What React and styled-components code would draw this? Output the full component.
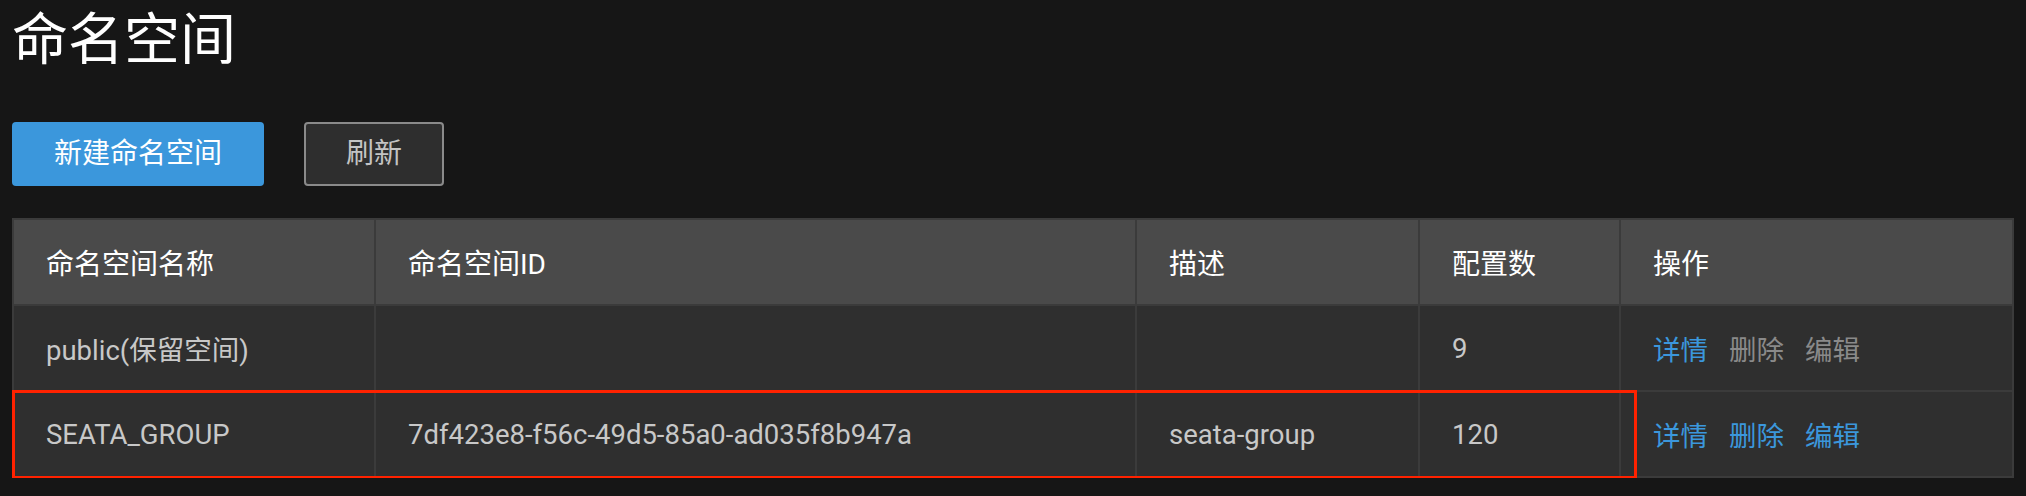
import React from 'react';
import styled, { createGlobalStyle } from 'styled-components';

const GlobalStyle = createGlobalStyle`
  body {
    margin: 0;
    padding: 0;
    background: #161616;
    font-family: Roboto, 'Noto Sans CJK SC', sans-serif;
    color: #ffffff;
  }
`;

const Page = styled.div`
  padding: 12px 12px 0 12px;
`;

const Title = styled.h1`
  margin: 0;
  font-size: 56px;
  line-height: 56px;
  font-weight: 400;
  color: #ffffff;
`;

const Toolbar = styled.div`
  display: flex;
  gap: 40px;
  margin-top: 54px;
`;

const Button = styled.button`
  box-sizing: border-box;
  height: 64px;
  padding: 0 ${(p) => (p.primary ? '42px' : '40px')};
  border-radius: 4px;
  font-family: inherit;
  font-size: 28px;
  line-height: 1;
  cursor: pointer;
  border: ${(p) => (p.primary ? 'none' : '2px solid #8a8a8a')};
  background: ${(p) => (p.primary ? '#3b97dc' : '#2e2e2e')};
  color: ${(p) => (p.primary ? '#ffffff' : '#c4c4c4')};
`;

const TableWrap = styled.div`
  position: relative;
  margin-top: 32px;
  width: 2002px;
`;

const Grid = styled.div`
  display: grid;
  grid-template-columns: 360px 759px 281px 199px 391px;
  grid-auto-rows: 84px;
  gap: 2px;
  padding: 2px;
  background: #3b3b3b;
`;

const Cell = styled.div`
  display: flex;
  align-items: center;
  gap: 21px;
  padding-left: 32px;
  font-size: ${(p) => (p.head ? '28px' : '27.5px')};
  background: ${(p) => (p.head ? '#4a4a4a' : '#2f2f2f')};
  color: ${(p) => (p.head ? '#ffffff' : '#c8c8c8')};
  white-space: nowrap;
`;

const Action = styled.a`
  color: ${(p) => (p.muted ? '#8a8a8a' : '#3b97dc')};
  text-decoration: none;
  cursor: pointer;
`;

const Highlight = styled.div`
  position: absolute;
  left: 0;
  top: 172px;
  width: 1625px;
  height: 89px;
  box-sizing: border-box;
  border: 3px solid #ff2200;
  pointer-events: none;
`;

const columns = ['命名空间名称', '命名空间ID', '描述', '配置数', '操作'];

const rows = [
  { name: 'public(保留空间)', id: '', desc: '', count: '9', reserved: true },
  {
    name: 'SEATA_GROUP',
    id: '7df423e8-f56c-49d5-85a0-ad035f8b947a',
    desc: 'seata-group',
    count: '120',
    reserved: false,
  },
];

function App() {
  return (
    <>
      <GlobalStyle />
      <Page>
        <Title>命名空间</Title>
        <Toolbar>
          <Button primary>新建命名空间</Button>
          <Button>刷新</Button>
        </Toolbar>
        <TableWrap>
          <Grid>
            {columns.map((c) => (
              <Cell head key={c}>{c}</Cell>
            ))}
            {rows.map((r) => (
              <React.Fragment key={r.name}>
                <Cell>{r.name}</Cell>
                <Cell>{r.id}</Cell>
                <Cell>{r.desc}</Cell>
                <Cell>{r.count}</Cell>
                <Cell>
                  <Action>详情</Action>
                  <Action muted={r.reserved}>删除</Action>
                  <Action muted={r.reserved}>编辑</Action>
                </Cell>
              </React.Fragment>
            ))}
          </Grid>
          <Highlight />
        </TableWrap>
      </Page>
    </>
  );
}

export default App;
